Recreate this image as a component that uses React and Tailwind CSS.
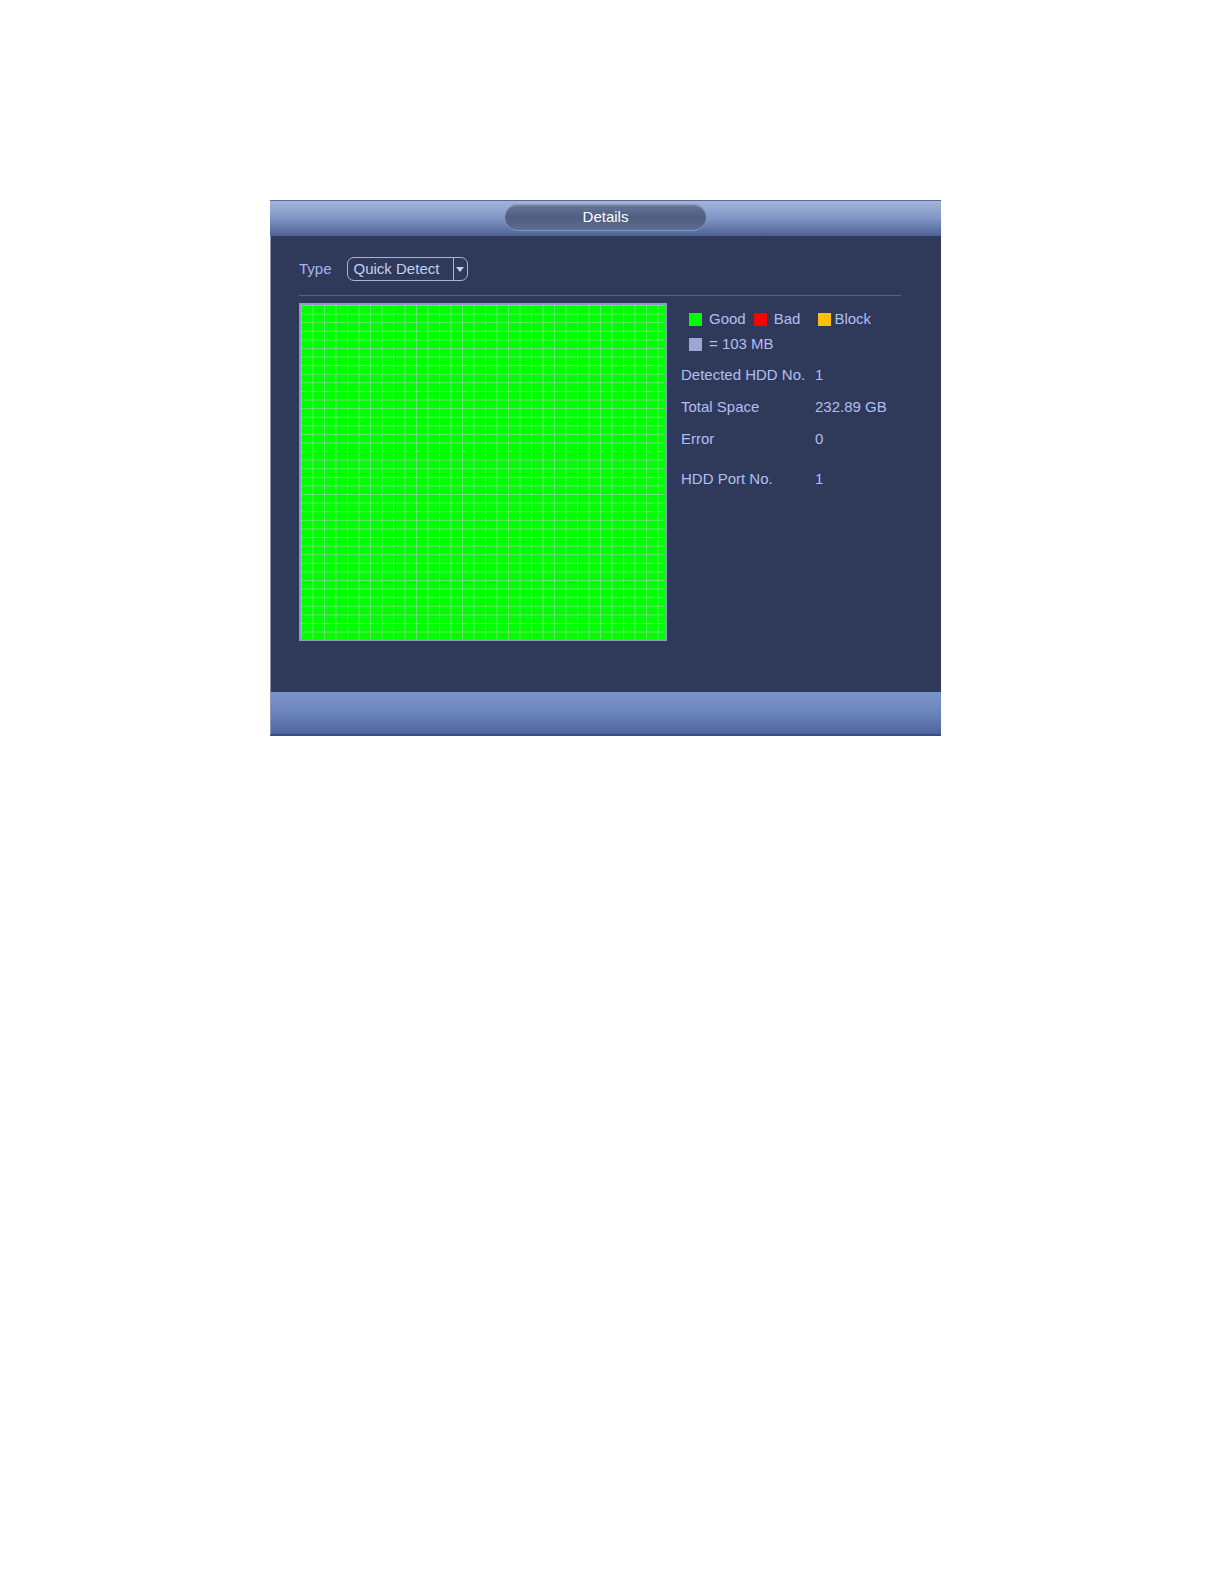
import React from 'react';

const rows = [
  { label: 'Detected HDD No.', value: '1', mt: 'mt-[14px]' },
  { label: 'Total Space', value: '232.89 GB', mt: 'mt-[12px]' },
  { label: 'Error', value: '0', mt: 'mt-[12px]' },
  { label: 'HDD Port No.', value: '1', mt: 'mt-[20px]' },
];

const Legend = ({ color, label }) => (
  <div className="flex items-center">
    <span className={`w-[13px] h-[13px] ${color}`} />
    <span className="ml-[7px]">{label}</span>
  </div>
);

export default function App() {
  return (
    <div className="bg-white pt-[200px] pl-[270px] pb-[40px] font-['Liberation_Sans',Arial,sans-serif]">
      <div className="w-[671px] flex flex-col">
        {/* Header */}
        <div className="h-[36px] border-t border-[#5b6a8e] bg-gradient-to-b from-[#a2b4da] via-[#8095c6] to-[#4e6196] flex justify-center items-start pt-[3px]">
          <div className="w-[203px] h-[27px] rounded-full border border-[#8896b8] bg-gradient-to-b from-[#66759a] via-[#4f5d80] to-[#5d6c90] flex items-center justify-center text-white text-[15px] shadow-[inset_0_1px_0_rgba(255,255,255,0.15)]">
            Details
          </div>
        </div>

        {/* Body */}
        <div className="h-[456px] bg-[#2f3a5a] border-l border-[#8e98b0] pl-[28px] pr-[40px] pt-[21px]">
          <div className="flex items-center h-[24px]">
            <span className="text-[15px] text-[#a4b4f2]">Type</span>
            <div className="ml-[15px] w-[121px] h-[24px] rounded-[7px] border border-[#aab4d6] flex items-center text-[15px] text-[#c6cef0]">
              <span className="pl-[6px] flex-1">Quick Detect</span>
              <div className="w-[14px] h-full border-l border-[#aab4d6] flex items-center justify-center">
                <svg width="8" height="5" viewBox="0 0 8 5">
                  <path d="M0 0 L8 0 L4 5 Z" fill="#c6cef0" />
                </svg>
              </div>
            </div>
          </div>

          <div className="mt-[14px] h-px bg-[#56628a]" />

          <div className="mt-[7px] flex">
            <div className="w-[368px] h-[338px] border-2 border-[#8a9cc8] bg-[#00ff00] bg-[linear-gradient(to_right,rgba(170,210,190,0.6)_1px,transparent_1px),linear-gradient(to_bottom,rgba(170,210,190,0.6)_1px,transparent_1px)] bg-[size:11.5px_8.6px]" />

            <div className="ml-[14px] flex flex-col text-[15px] text-[#b2bef2]">
              <div className="pl-[8px] pt-[9px] flex flex-col gap-[11px]">
                <div className="flex items-center h-[14px]">
                  <Legend color="bg-[#00ff00]" label="Good" />
                  <div className="ml-[8px]"><Legend color="bg-[#ff0000]" label="Bad" /></div>
                  <div className="ml-[18px] flex items-center">
                    <span className="w-[13px] h-[13px] bg-[#ffc000]" />
                    <span className="ml-[3px]">Block</span>
                  </div>
                </div>
                <div className="flex items-center h-[14px]">
                  <Legend color="bg-[#9aa6d4]" label="= 103 MB" />
                </div>
              </div>

              {rows.map((r) => (
                <div key={r.label} className={`flex items-center h-[20px] ${r.mt}`}>
                  <span className="w-[134px]">{r.label}</span>
                  <span>{r.value}</span>
                </div>
              ))}
            </div>
          </div>
        </div>

        {/* Footer */}
        <div className="h-[44px] bg-gradient-to-b from-[#7a95cc] via-[#6c84bc] to-[#4d649e] border-b-2 border-[#3a4c80] border-l border-l-[#8e98b0]" />
      </div>
    </div>
  );
}
